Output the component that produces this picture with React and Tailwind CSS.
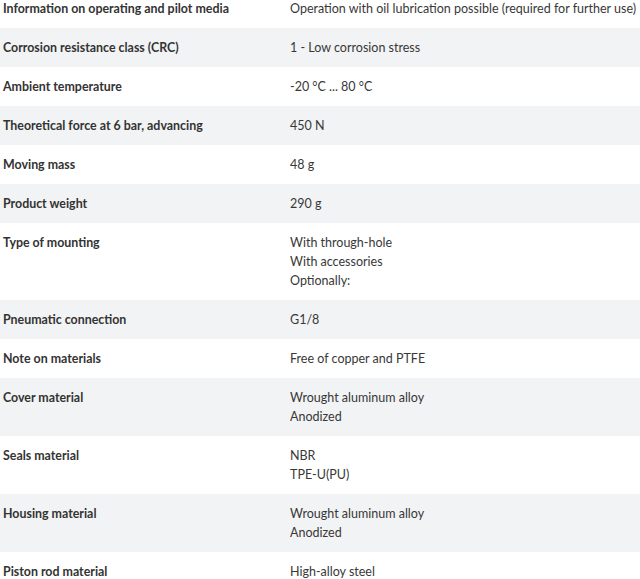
const rows = [
  ["Information on operating and pilot media", ["Operation with oil lubrication possible (required for further use)"]],
  ["Corrosion resistance class (CRC)", ["1 - Low corrosion stress"]],
  ["Ambient temperature", ["-20 °C ... 80 °C"]],
  ["Theoretical force at 6 bar, advancing", ["450 N"]],
  ["Moving mass", ["48 g"]],
  ["Product weight", ["290 g"]],
  ["Type of mounting", ["With through-hole", "With accessories", "Optionally:"]],
  ["Pneumatic connection", ["G1/8"]],
  ["Note on materials", ["Free of copper and PTFE"]],
  ["Cover material", ["Wrought aluminum alloy", "Anodized"]],
  ["Seals material", ["NBR", "TPE-U(PU)"]],
  ["Housing material", ["Wrought aluminum alloy", "Anodized"]],
  ["Piston rod material", ["High-alloy steel"]],
];

export default function App() {
  return (
    <div className="w-[640px] h-[579px] overflow-hidden bg-white font-['Lato',sans-serif] text-[12.5px] leading-[19px] text-[#383838]">
      <div className="-mt-[11.5px]">
        {rows.map(([label, vals], i) => (
          <div key={i} className={`flex py-[10px] whitespace-nowrap ${i % 2 ? "bg-[#f2f3f4]" : "bg-white"}`}>
            <div className="w-[290px] shrink-0 pl-[3px] font-bold text-[12.4px] text-[#333]">{label}</div>
            <div className="flex-1">
              {vals.map((v, j) => <div key={j}>{v}</div>)}
            </div>
          </div>
        ))}
      </div>
    </div>
  );
}
